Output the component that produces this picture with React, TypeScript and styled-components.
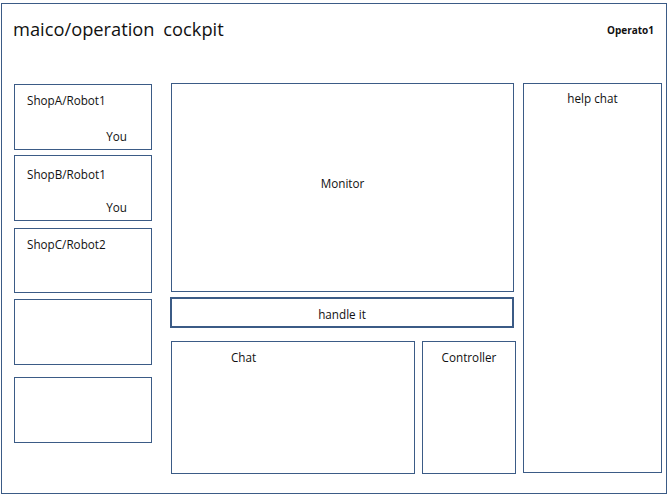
import React from "react";
import styled, { createGlobalStyle } from "styled-components";

const GlobalStyle = createGlobalStyle`
  html, body {
    margin: 0;
    padding: 0;
    background: #ffffff;
  }
  body {
    font-family: "Open Sans", "Noto Sans", "Liberation Sans", sans-serif;
    color: #111111;
  }
`;

const LINE = "#3b5b86";

type CardProps = {
  title?: string;
  you?: boolean;
  padTop?: number;
  gapTop?: number;
  height?: number;
};

function RobotCard({ title, you, padTop = 8, gapTop = 0, height = 66 }: CardProps) {
  return (
    <CardBox $padTop={padTop} $gapTop={gapTop} $height={height}>
      {title && <CardTitle>{title}</CardTitle>}
      {you && <YouTag>You</YouTag>}
    </CardBox>
  );
}

function App() {
  return (
    <>
      <GlobalStyle />
      <Frame>
        <Header>
          <Title>maico/operation cockpit</Title>
          <Operator>Operato1</Operator>
        </Header>
        <Body>
          <LeftColumn>
            <RobotCard title="ShopA/Robot1" you padTop={8} />
            <RobotCard title="ShopB/Robot1" you padTop={11} gapTop={5} />
            <RobotCard title="ShopC/Robot2" padTop={8} gapTop={7} height={65} />
            <RobotCard gapTop={6} />
            <RobotCard gapTop={12} />
          </LeftColumn>
          <MiddleColumn>
            <Monitor>Monitor</Monitor>
            <HandleButton>handle it</HandleButton>
            <BottomRow>
              <ChatPanel>Chat</ChatPanel>
              <ControllerPanel>Controller</ControllerPanel>
            </BottomRow>
          </MiddleColumn>
          <HelpChat>help chat</HelpChat>
        </Body>
      </Frame>
    </>
  );
}

const Frame = styled.div`
  box-sizing: border-box;
  width: 666px;
  height: 491px;
  margin: 3px 0 0 1px;
  border: 1px solid ${LINE};
  display: flex;
  flex-direction: column;
`;
const Header = styled.div`
  height: 79px;
  display: flex;
  justify-content: space-between;
  align-items: flex-start;
  padding: 0 12px 0 11px;
`;
const Title = styled.div`
  font-size: 18.3px;
  line-height: 26px;
  word-spacing: 4px;
  padding-top: 12px;
  color: #111;
`;
const Operator = styled.div`
  font-size: 10px;
  font-weight: 700;
  line-height: 15px;
  padding-top: 19px;
`;
const Body = styled.div`
  display: flex;
  align-items: flex-start;
  padding-left: 12px;
`;
const LeftColumn = styled.div`
  width: 138px;
  display: flex;
  flex-direction: column;
  padding-top: 1px;
`;
const CardBox = styled.div<{ $padTop: number; $gapTop: number; $height: number }>`
  box-sizing: border-box;
  height: ${(p) => p.$height}px;
  margin-top: ${(p) => p.$gapTop}px;
  border: 1px solid ${LINE};
  padding: ${(p) => p.$padTop}px 24px 5px 12px;
  display: flex;
  flex-direction: column;
`;
const CardTitle = styled.div`
  font-size: 11.7px;
  line-height: 15px;
`;
const YouTag = styled.div`
  margin-top: auto;
  align-self: flex-end;
  font-size: 11.7px;
  line-height: 15px;
`;
const MiddleColumn = styled.div`
  width: 345px;
  margin-left: 19px;
  display: flex;
  flex-direction: column;
`;
const Panel = styled.div`
  box-sizing: border-box;
  border: 1px solid ${LINE};
  font-size: 11.7px;
  line-height: 15px;
`;
const Monitor = styled(Panel)`
  width: 343px;
  height: 209px;
  padding-top: 92px;
  text-align: center;
`;
const HandleButton = styled(Panel)`
  width: 344px;
  height: 31px;
  margin: 5px 0 0 -1px;
  border-width: 2px;
  padding-top: 8px;
  text-align: center;
`;
const BottomRow = styled.div`
  display: flex;
  gap: 7px;
  margin-top: 13px;
`;
const ChatPanel = styled(Panel)`
  width: 244px;
  height: 133px;
  padding: 8px 0 0 59px;
`;
const ControllerPanel = styled(Panel)`
  width: 94px;
  height: 133px;
  padding-top: 8px;
  text-align: center;
`;
const HelpChat = styled(Panel)`
  width: 139px;
  height: 390px;
  margin-left: 7px;
  padding-top: 7px;
  text-align: center;
`;

export default App;
